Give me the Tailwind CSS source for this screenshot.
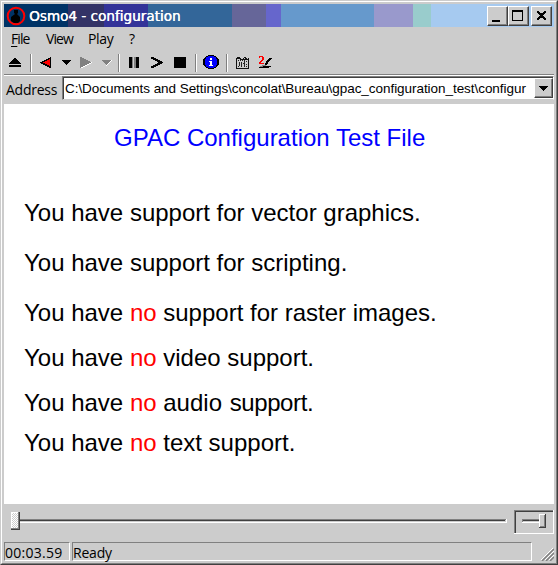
<!DOCTYPE html>
<html lang="en">
<head>
<meta charset="utf-8">
<title>Osmo4 - configuration</title>
<script src="https://cdn.jsdelivr.net/npm/@tailwindcss/browser@4"></script>
</head>
<body class="w-[558px] h-[565px] overflow-hidden bg-[#cccccc] text-black">
<div class="w-[558px] h-[565px] border-t border-l border-[#cccccc] border-r border-b border-r-[#404040] border-b-[#404040]">
<div class="w-[556px] h-[563px] border border-white border-r-[#808080] border-b-[#808080] p-[2px] pr-[1px] flex flex-col whitespace-nowrap">

  <header class="h-[23px] w-[550px] flex items-center pr-[2px] shrink-0 bg-[linear-gradient(90deg,#003366_64px,#333366_64px_100px,#333399_100px_144px,#336699_144px_228px,#666699_228px_262px,#6666cc_262px_277px,#6699cc_277px_370px,#9999cc_370px_409px,#99cccc_409px_427px,#a6caf0_427px)]">
    <svg class="ml-[2px] w-5 h-5 shrink-0" viewBox="0 0 20 20"><circle cx="10" cy="10" r="8.3" fill="#003366" stroke="#ff0000" stroke-width="2"/><path d="M8 4h4v3l-1 1 3 3v4l-2 2H8l-3-2v-4l4-3-1-1z" fill="#000"/></svg>
    <h1 class="ml-[3px] grow font-['DejaVu_Sans',sans-serif] text-[13.5px] leading-[22px] tracking-[0.04px] text-white [text-shadow:0.4px_0_0_white]">Osmo4 - configuration</h1>
    <div class="flex h-[20px]">
      <button class="w-[21px] h-[20px] border border-white border-r-[#404040] border-b-[#404040] bg-[#cccccc] shadow-[inset_-1px_-1px_#808080]"><svg width="19" height="18" shape-rendering="crispEdges"><path d="M4 13h8v2H4z"/></svg></button>
      <button class="w-[21px] h-[20px] border border-white border-r-[#404040] border-b-[#404040] bg-[#cccccc] shadow-[inset_-1px_-1px_#808080]"><svg width="19" height="18" shape-rendering="crispEdges"><path fill-rule="evenodd" d="M3 3h11v11H3zM4 5v8h9V5z"/></svg></button>
      <button class="ml-[2px] w-[21px] h-[20px] border border-white border-r-[#404040] border-b-[#404040] bg-[#cccccc] shadow-[inset_-1px_-1px_#808080]"><svg width="19" height="18" shape-rendering="crispEdges"><path d="M5 4h2v1h1v1h3V5h1V4h2v2h-1v1h-1v1h-1v1h1v1h1v1h1v2h-2v-1h-1v-1H8v1H7v1H5v-2h1v-1h1V9h1V8H7V7H6V6H5z"/></svg></button>
    </div>
  </header>

  <nav class="h-[23px] shrink-0 flex font-['Open_Sans','Noto_Sans',sans-serif] text-[14px] leading-[24px]">
    <span class="ml-[7px] w-[35px] tracking-[-0.9px]"><u class="underline-offset-2">F</u>ile</span>
    <span class="w-[42px] tracking-[-0.9px]">View</span>
    <span class="w-[41px] tracking-[-0.3px]">Play</span>
    <span>?</span>
  </nav>

  <div class="h-[26px] w-[550px] shrink-0 border-b border-white shadow-[inset_0_-1px_#808080]">
    <svg width="550" height="24" viewBox="4 50 550 24" shape-rendering="crispEdges">
      <g><path fill="#808080" d="M30 54h1v18h-1zM118 54h1v18h-1zM195 54h1v18h-1zM226 54h1v18h-1z"/><path fill="#fff" d="M31 54h1v18h-1zM119 54h1v18h-1zM196 54h1v18h-1zM227 54h1v18h-1z"/></g>
      <path d="M14 58h2v1h1v1h1v1h1v1h1v1h1v1H9v-1h1v-1h1v-1h1v-1h1v-1h1zM9 65h12v2H9z"/>
      <path d="M49 57h2v11h-2v-1h-2v-1h-2v-1h-2v-1h-2v-1h-1v-1h2v-1h2v-1h2v-1h2v-1h2z"/><path fill="#f00" d="M49 59h1v7h-1v-1h-2v-1h-2v-1h-2v-1h2v-1h2v-1h2z"/>
      <path d="M62 60h9v1h-1v1h-1v1h-1v1h-1v1h-1v-1h-1v-1h-1v-1h-1v-1h-1z"/>
      <path fill="#fff" d="M81 67h2v-1h2v-1h2v-1h2v-1h2v-1h1v1h-1v1h-2v1h-2v1h-2v1h-2v1h-2z"/><path fill="#808080" d="M80 57h2v1h2v1h2v1h2v1h2v1h1v1h-2v1h-2v1h-2v1h-2v1h-2v1h-1z"/>
      <path fill="#fff" d="M111 60h1v1h-1v1h-1v1h-1v1h-1v1h-1v1h-1v-1h1v-1h1v-1h1v-1h1v-1h1z"/><path fill="#808080" d="M102 60h9v1h-1v1h-1v1h-1v1h-1v1h-1v-1h-1v-1h-1v-1h-1v-1h-1z"/>
      <path d="M129 57h3v11h-3zM135 57h4v11h-4z"/><path fill="#808080" d="M132 57h1v11h-1zM134 57h2v11h-2z"/>
      <path d="M151 57h3v1h2v1h2v1h2v1h2v1h1v1h-1v1h-2v1h-2v1h-2v1h-2v1h-3v-2h2v-1h2v-1h2v-1h1v-1h-1v-1h-2v-1h-2v-1h-2zM174 57h12v11h-12z"/>
      <path d="M208 55h6v1h2v1h1v1h1v1h1v6h-1v1h-1v1h-1v1h-2v1h-6v-1h-2v-1h-1v-1h-1v-1h-1v-6h1v-1h1v-1h1v-1h2z"/><path fill="#00f" d="M208 56h6v1h2v2h1v6h-1v2h-2v1h-6v-1h-2v-2h-1v-6h1v-2h2z"/><path fill="#fff" d="M210 58h2v2h-2zM209 61h3v4h1v1h-4v-1h1v-3h-1z"/>
      <path fill="#111" d="M237 57h3v1h1v1h2v-1h1v-1h2v1h1v1h1v-1h1v11h-13V58h1z"/><path fill="#ccc" d="M237 59h3v1h8v8h-11zM244 58h1v1h-1z"/><path fill="#222" d="M238 60h1v1h-1zM240 60h1v1h-1zM242 60h1v1h-1zM244 60h1v7h-1zM246 61h1v1h-1zM239 62h1v4h-1zM241 62h1v5h-1zM246 64h1v1h-1zM238 66h1v1h-1zM243 63h1v1h-1zM246 66h1v1h-1z"/>
      <path fill="#f00" d="M259 56h4v1h1v3h-1v1h-1v1h-1v1h3v1h-5v-2h1v-1h1v-1h1v-3h-2v1h-1z"/><path d="M269 58h3v1h-1v1h-1v1h-1v1h-1v2h-1v1h-1v1h5v1h-2v1h-10v-1h1v-1h4v-1h1v-2h1v-2h1v-1h1z"/><path fill="#808080" d="M262 65h4v1h-4zM260 66h3v1h-3z"/>
    </svg>
  </div>

  <div class="h-[28px] shrink-0 w-[550px] flex font-['Liberation_Sans',Arial,sans-serif]">
    <label class="w-[58px] pl-[2px] pt-[2px] text-[14px] leading-[24px] tracking-[-0.25px] font-['Open_Sans','Noto_Sans',sans-serif]">Address</label>
    <div class="w-[492px] h-[24px] bg-white border border-[#808080] border-b-[#cccccc] border-r-white flex">
      <div class="w-[490px] h-[22px] border-t border-l border-[#404040] flex">
        <span class="grow pl-[1px] text-[13.5px] leading-[21px] tracking-[-0.05px]">C:\Documents and Settings\concolat\Bureau\gpac_configuration_test\configur</span>
        <button class="w-[19px] h-[20px] border border-white border-r-[#404040] border-b-[#404040] bg-[#cccccc] shadow-[inset_-1px_-1px_#808080]"><svg width="17" height="18" shape-rendering="crispEdges"><path d="M4 7h9v1h-1v1h-1v1h-1v1H9v1H8v-1H7v-1H6V9H5V8H4z"/></svg></button>
      </div>
    </div>
  </div>

  <main class="h-[400px] w-[550px] shrink-0 bg-white pl-5 pt-[22px] font-['Liberation_Sans',Arial,sans-serif] text-[24px] leading-[24px]">
    <h2 class="ml-[90px] text-[#0000ff]">GPAC Configuration Test File</h2>
    <p class="mt-[51px]">You have support for vector graphics.</p>
    <p class="mt-[26px]">You have support for scripting.</p>
    <p class="mt-[26px]">You have <span class="text-[#ff0000]">no</span> support for raster images.</p>
    <p class="mt-[21px]">You have <span class="text-[#ff0000]">no</span> video support.</p>
    <p class="mt-[21px]">You have <span class="text-[#ff0000]">no</span> audio <span class="ml-[1px] tracking-[-0.4px]">support.</span></p>
    <p class="mt-[16px]">You have <span class="text-[#ff0000]">no</span> text support.</p>
  </main>

  <div class="h-[38px] shrink-0 w-[550px]">
    <svg width="550" height="38" viewBox="4 504 550 38" shape-rendering="crispEdges">
      <defs><pattern id="dither" width="2" height="2" patternUnits="userSpaceOnUse"><path fill="#fff" d="M0 0h2v2H0z"/><path fill="#ccc" d="M0 0h1v1H0zM1 1h1v1H1z"/></pattern></defs>
      <path fill="#808080" d="M19 519h487v1H19z"/><path fill="#404040" d="M19 520h486v1H19z"/><path fill="#fff" d="M19 522h488v1H19zM506 519h1v4h-1z"/>
      <path fill="#404040" d="M11 512h9v18h-9z"/><path fill="#808080" d="M11 512h8v17h-8z"/><path fill="#fff" d="M11 512h7v16h-7z"/><path fill="url(#dither)" d="M12 513h6v15h-6z"/>
      <path fill="#fff" d="M514 510h40v24h-40z"/><path fill="#808080" d="M514 510h39v23h-39z"/><path fill="#404040" d="M515 511h38v22h-38z"/><path fill="#ccc" d="M516 512h37v21h-37z"/>
      <path fill="#808080" d="M522 519h18v1h-18zM522 520h1v2h-1z"/><path fill="#404040" d="M523 520h17v1h-17z"/><path fill="#fff" d="M522 522h18v1h-18z"/>
      <path fill="#404040" d="M539 514h7v14h-7z"/><path fill="#fff" d="M539 514h6v13h-6z"/><path fill="#808080" d="M544 515h1v12h-5v-1h4z"/><path fill="#ccc" d="M540 515h4v11h-4z"/>
    </svg>
  </div>

  <footer class="h-[19px] shrink-0 w-[550px] flex font-['Open_Sans','Noto_Sans',sans-serif] text-[14px] leading-[19px]">
    <div class="w-[66px] h-[19px] border border-[#808080] border-r-white border-b-white tracking-[0.25px]">00:03.59</div>
    <div class="ml-[2px] w-[460px] h-[19px] border border-[#808080] border-r-white border-b-white tracking-[-0.2px]">Ready</div>
    <svg class="ml-auto mt-[6px]" width="13" height="13"><g stroke="#808080" stroke-width="1.5"><path d="M1 13L13 1M5 13L13 5M9 13L13 9"/></g><g stroke="#fff" stroke-width="1"><path d="M0 12L12 0M4 12L13 3M8 12L13 7"/></g></svg>
  </footer>
</div>
</div>
</body>
</html>
